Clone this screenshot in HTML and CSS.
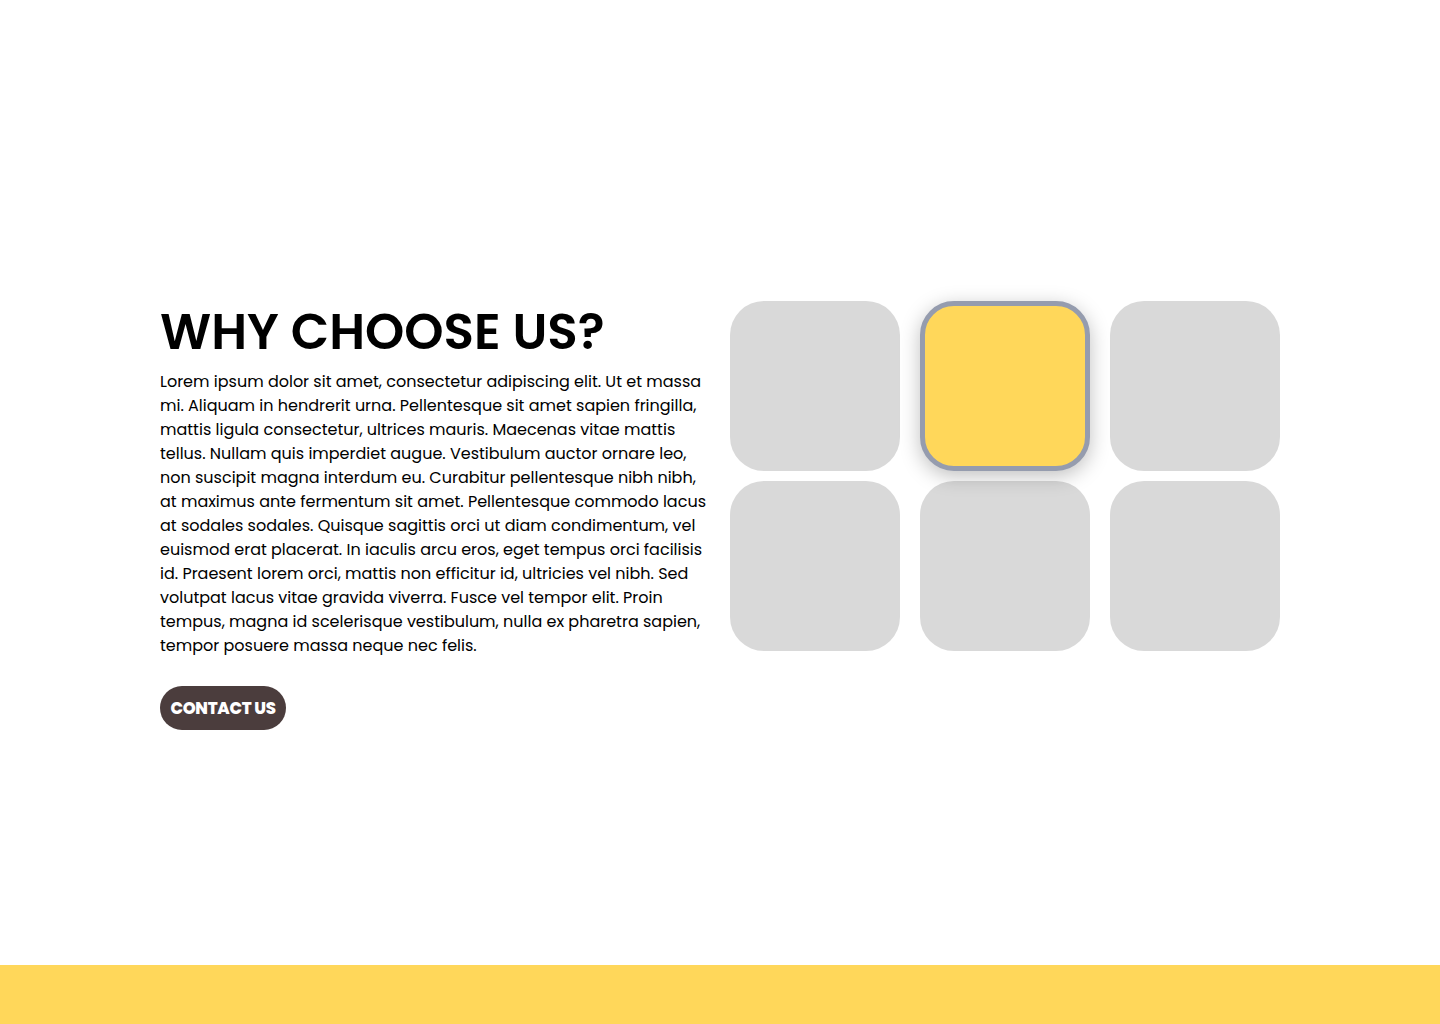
FILE: index.html
```html
<!DOCTYPE html>
<html lang="en">
<head>
<meta charset="utf-8">
<title>Why choose us</title>
<link rel="stylesheet" href="styles.css">
</head>
<body>
<main class="page">
  <section class="why">
    <div class="why-text">
      <h1 class="why-title">WHY CHOOSE US?</h1>
      <p class="why-copy">Lorem ipsum dolor sit amet, consectetur adipiscing elit. Ut et massa<br>mi. Aliquam in hendrerit urna. Pellentesque sit amet sapien fringilla,<br>mattis ligula consectetur, ultrices mauris. Maecenas vitae mattis<br>tellus. Nullam quis imperdiet augue. Vestibulum auctor ornare leo,<br>non suscipit magna interdum eu. Curabitur pellentesque nibh nibh,<br>at maximus ante fermentum sit amet. Pellentesque commodo lacus<br>at sodales sodales. Quisque sagittis orci ut diam condimentum, vel<br>euismod erat placerat. In iaculis arcu eros, eget tempus orci facilisis<br>id. Praesent lorem orci, mattis non efficitur id, ultricies vel nibh. Sed<br>volutpat lacus vitae gravida viverra. Fusce vel tempor elit. Proin<br>tempus, magna id scelerisque vestibulum, nulla ex pharetra sapien,<br>tempor posuere massa neque nec felis.</p>
      <a class="btn" href="#">CONTACT US</a>
    </div>
    <div class="tiles">
      <div class="tile"></div>
      <div class="tile tile-active"></div>
      <div class="tile"></div>
      <div class="tile"></div>
      <div class="tile"></div>
      <div class="tile"></div>
    </div>
  </section>
</main>
<footer class="footer"></footer>
</body>
</html>
```

FILE: styles.css
```css
html, body {
  margin: 0;
  padding: 0;
  background: #ffffff;
}
body {
  font-family: "Poppins", "Open Sans", "Noto Sans", sans-serif;
  color: #000;
}
.page {
  height: 965px;
  box-sizing: border-box;
  padding-top: 301px;
}
.why {
  display: flex;
  justify-content: center;
  align-items: flex-start;
  gap: 20px;
}
.why-text {
  width: 550px;
}
.why-title {
  margin: 0;
  font-size: 50px;
  line-height: 62px;
  font-weight: 600;
  letter-spacing: 0;
}
.why-copy {
  margin: 7px 0 0;
  font-size: 16px;
  line-height: 24px;
  white-space: nowrap;
}
.btn {
  display: inline-flex;
  align-items: center;
  justify-content: center;
  margin-top: 28px;
  width: 126px;
  height: 44px;
  border-radius: 22px;
  background: #4b3d3d;
  color: #ffffff;
  font-weight: 800;
  font-size: 16.5px;
  letter-spacing: -0.3px;
  text-decoration: none;
}
.tiles {
  display: grid;
  grid-template-columns: repeat(3, 170px);
  grid-auto-rows: 170px;
  column-gap: 20px;
  row-gap: 10px;
}
.tile {
  background: #d9d9d9;
  border-radius: 34px;
}
.tile-active {
  position: relative;
  background: #ffd75a;
  border: 5px solid #959cae;
  box-shadow: 0 5px 20px rgba(0, 0, 0, 0.25);
}
.footer {
  height: 59px;
  background: #ffd75a;
}
```
